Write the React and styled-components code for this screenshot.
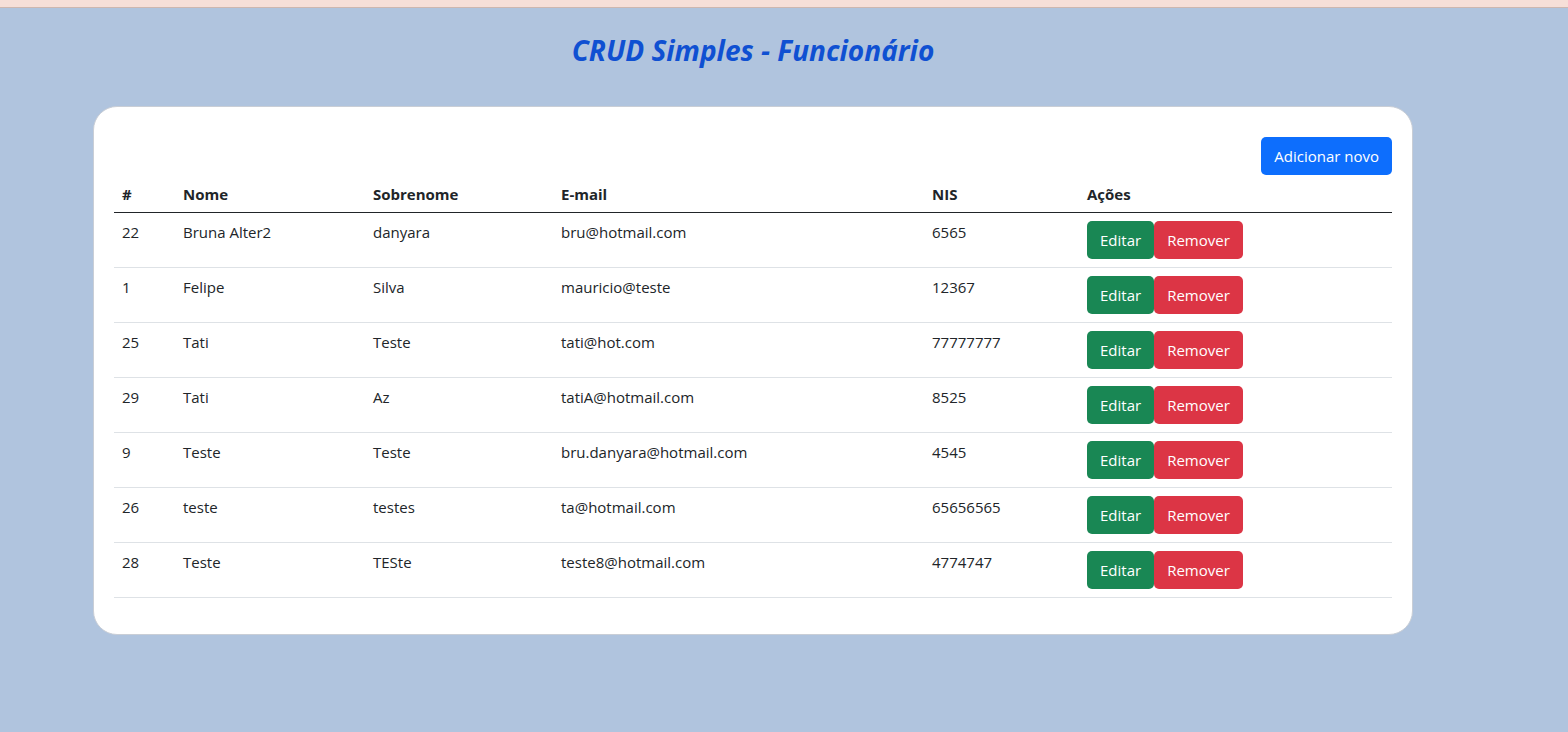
import React from "react";
import styled, { createGlobalStyle } from "styled-components";

const funcionarios = [
  { id: 22, nome: "Bruna Alter2", sobrenome: "danyara", email: "bru@hotmail.com", nis: "6565" },
  { id: 1, nome: "Felipe", sobrenome: "Silva", email: "mauricio@teste", nis: "12367" },
  { id: 25, nome: "Tati", sobrenome: "Teste", email: "tati@hot.com", nis: "77777777" },
  { id: 29, nome: "Tati", sobrenome: "Az", email: "tatiA@hotmail.com", nis: "8525" },
  { id: 9, nome: "Teste", sobrenome: "Teste", email: "bru.danyara@hotmail.com", nis: "4545" },
  { id: 26, nome: "teste", sobrenome: "testes", email: "ta@hotmail.com", nis: "65656565" },
  { id: 28, nome: "Teste", sobrenome: "TESte", email: "teste8@hotmail.com", nis: "4774747" },
];

const colunas = [
  { label: "#", width: 61 },
  { label: "Nome", width: 190 },
  { label: "Sobrenome", width: 188 },
  { label: "E-mail", width: 371 },
  { label: "NIS", width: 155 },
  { label: "Ações", width: 313 },
];

const App = () => {
  return (
    <>
      <GlobalStyle />
      <TopBar />
      <Page>
        <Title>CRUD Simples - Funcionário</Title>
        <Card>
          <Toolbar>
            <Button variant="primary">Adicionar novo</Button>
          </Toolbar>
          <Table>
            <colgroup>
              {colunas.map(c => <col key={c.label} style={{ width: c.width }} />)}
            </colgroup>
            <thead>
              <tr>
                {colunas.map(c => <Th key={c.label}>{c.label}</Th>)}
              </tr>
            </thead>
            <tbody>
              {funcionarios.map(f => (
                <Row key={f.id}>
                  <Td>{f.id}</Td>
                  <Td>{f.nome}</Td>
                  <Td>{f.sobrenome}</Td>
                  <Td>{f.email}</Td>
                  <Td>{f.nis}</Td>
                  <Td>
                    <Actions>
                      <Button variant="success">Editar</Button>
                      <Button variant="danger">Remover</Button>
                    </Actions>
                  </Td>
                </Row>
              ))}
            </tbody>
          </Table>
        </Card>
      </Page>
    </>
  );
}

export default App;

const GlobalStyle = createGlobalStyle`
  body {
    margin: 0;
    background: #b0c4de;
    font-family: "Open Sans", "Noto Sans", sans-serif;
    font-size: 16px;
    color: #212529;
    min-height: 732px;
  }
`;

const TopBar = styled.div`
  height: 7px;
  background: #f6dfd8;
  border-bottom: 1px solid #cdb7b0;
`;

const Page = styled.div`
  width: 1320px;
  margin-left: 93px;
`;

const Title = styled.h3`
  margin: 0;
  padding-top: 24px;
  height: 98px;
  box-sizing: border-box;
  text-align: center;
  font-size: 28px;
  font-weight: 700;
  font-style: italic;
  color: #0f50d2;
  line-height: 36px;
`;

const Card = styled.div`
  background: #fff;
  border: 1px solid #c9ced6;
  border-radius: 24px;
  padding: 30px 20px 36px;
`;

const Toolbar = styled.div`
  display: flex;
  justify-content: flex-end;
`;

const colors = {
  primary: "#0d6efd",
  success: "#198754",
  danger: "#dc3545",
};

const Button = styled.button`
  background: ${p => colors[p.variant]};
  color: #fff;
  border: none;
  border-radius: 5px;
  height: 38px;
  padding: 0 13px;
  font-family: inherit;
  font-size: 15px;
  line-height: 38px;
  cursor: pointer;
`;

const Table = styled.table`
  width: 1278px;
  border-collapse: collapse;
  table-layout: fixed;
`;

const Th = styled.th`
  text-align: left;
  font-weight: 700;
  font-size: 15px;
  padding: 0 8px;
  height: 37px;
  vertical-align: middle;
  border-bottom: 1px solid #212529;
`;

const Row = styled.tr`
  border-bottom: 1px solid #dee2e6;
`;

const Td = styled.td`
  font-size: 15px;
  padding: 7px 8px 9px;
  height: 38px;
  vertical-align: top;
  line-height: 24px;
`;

const Actions = styled.div`
  display: flex;
  gap: 0;
  margin-top: 1px;
  margin-bottom: -1px;
`;
